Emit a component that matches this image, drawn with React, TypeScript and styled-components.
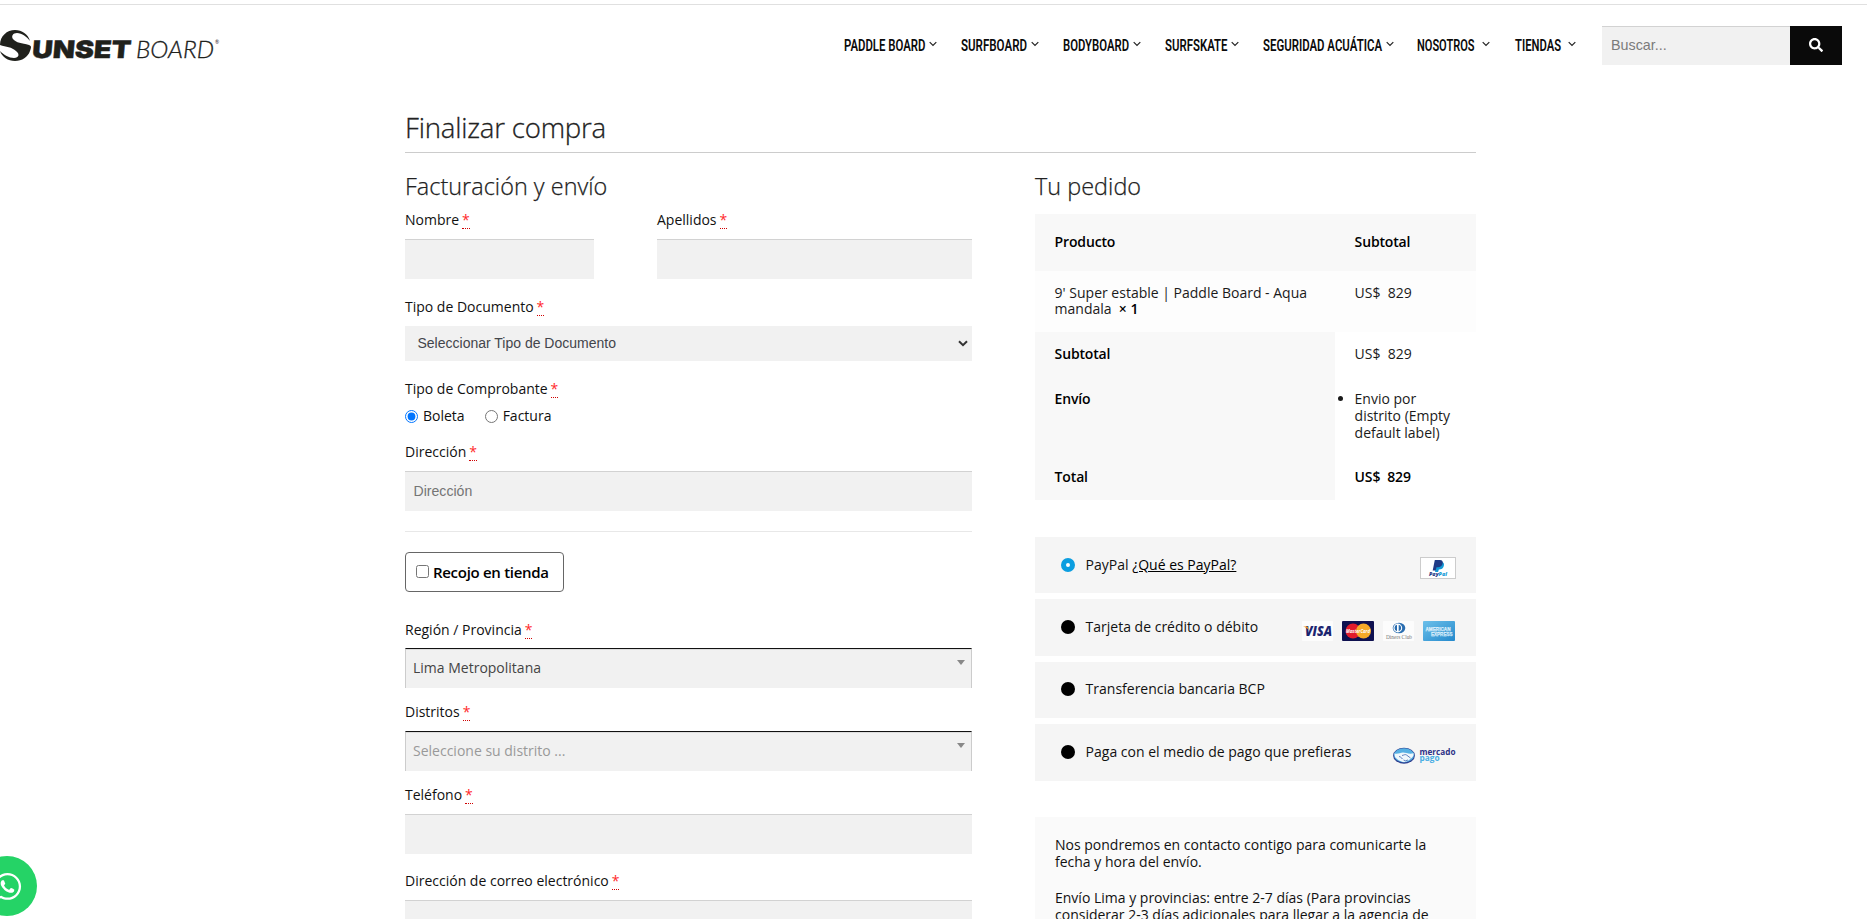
import React from "react";
import styled, { createGlobalStyle } from "styled-components";
import { FaSearch, FaWhatsapp } from "react-icons/fa";

const GlobalStyle = createGlobalStyle`
  *, *::before, *::after { box-sizing: border-box; }
  html, body { margin: 0; height: 919px; overflow: hidden; background: #fff; }
  body { font-family: "Open Sans", "Noto Sans", sans-serif; font-size: 14px; color: #111; }
  input, select { font-family: "Liberation Sans", Arial, sans-serif; margin: 0; }
`;

const Page = styled.div`
  height: 919px;
  overflow: hidden;
  border-top: 1px solid #e0e0e0;
  margin-top: 4px;
`;

const Header = styled.header`
  height: 101px;
  padding: 21px 25px 0 0;
  display: flex;
  align-items: flex-start;
`;

const Logo = styled.svg`
  display: block;
  flex: none;
  width: 222px;
  height: 40px;
`;

const Nav = styled.nav`
  display: flex;
  margin-left: auto;
  height: 36px;
  align-items: center;
`;

const NavItem = styled.a<{ $gap: number; $after: number }>`
  display: flex;
  align-items: center;
  gap: ${(p) => p.$gap}px;
  margin-right: ${(p) => p.$after}px;
  color: #0b0b0b;
`;

const NavText = styled.span<{ $w: number }>`
  display: block;
  width: ${(p) => p.$w}px;
  height: 20px;

  svg {
    display: block;
    overflow: visible;
  }
  text {
    font: 600 17px/20px Roboto, sans-serif;
    fill: #0b0b0b;
  }
`;

const SearchForm = styled.form`
  display: flex;
  width: 240px;
  height: 39px;
`;

const SearchInput = styled.input`
  flex: 1;
  min-width: 0;
  border: 0;
  border-top: 1px solid #d2d2d2;
  border-radius: 0;
  padding: 0 9px 2px;
  font-size: 14.3px;
  background: #f1f1f1;
  outline: none;
  &::placeholder { color: #7b7b7b; }
`;

const SearchButton = styled.button`
  width: 52px;
  border: 0;
  padding: 0 0 2px;
  background: #0a0a0a;
  color: #fff;
  display: flex;
  align-items: center;
  justify-content: center;
`;

const Main = styled.main`
  width: 1071px;
  margin-left: 405px;
`;

const PageTitle = styled.h1`
  margin: 0;
  height: 47px;
  border-bottom: 1px solid #ccc;
  font-size: 27.6px;
  line-height: 42px;
  font-weight: 300;
  letter-spacing: -0.2px;
  -webkit-text-stroke: 0.3px #222;
  color: #222;
`;

const Columns = styled.div`
  display: flex;
  gap: 63px;
`;

const Billing = styled.section`
  width: 567px;
  padding-top: 16px;
`;

const Order = styled.section`
  width: 441px;
  padding-top: 16px;
`;

const SectionTitle = styled.h2<{ $h: number }>`
  margin: 0;
  height: ${(p) => p.$h}px;
  line-height: 34px;
  font-size: 23.4px;
  font-weight: 300;
  letter-spacing: 0.04px;
  -webkit-text-stroke: 0.25px #222;
  color: #222;
`;

const NameRow = styled.div`
  display: grid;
  grid-template-columns: 189px 315px;
  gap: 63px;
`;

const Field = styled.div<{ $after: number }>`
  margin-bottom: ${(p) => p.$after}px;
`;

const Label = styled.label<{ $gap?: number }>`
  display: block;
  line-height: 24px;
  padding-top: 1px;
  margin-bottom: ${(p) => (p.$gap ?? 8) - 1}px;
  color: #111;
`;

const Required = styled.abbr`
  color: #ff2a2a;
  text-decoration: none;
  display: inline-block;
  height: 16px;
  line-height: 14px;
  margin-left: -0.7px;
  border-bottom: 1px dotted #d00000;
`;

const TextInput = styled.input`
  display: block;
  width: 100%;
  height: 40px;
  border: 0;
  border-top: 1px solid #d2d2d2;
  border-radius: 0;
  background: #f1f1f1;
  padding: 0 8.5px 2px;
  font-size: 14.1px;
  outline: none;
  &::placeholder { color: #757575; }
`;

const NativeSelect = styled.div`
  height: 35px;
  background: #f1f1f1;
  padding: 0 4px 1px 12.5px;
  display: flex;
  align-items: center;
  justify-content: space-between;
  font: 14px/34px "Liberation Sans", Arial, sans-serif;
  color: #43454b;
`;

const SearchableSelect = styled.div<{ $muted?: boolean }>`
  height: 40px;
  background: #f1f1f1;
  border: 1px solid #ccc;
  border-width: 1px 1px 0;
  border-top-color: #111;
  box-shadow: inset 0 1px 0 #ddd;
  padding: 0 6px 0 7px;
  display: flex;
  justify-content: space-between;
  line-height: 38px;
  color: ${(p) => (p.$muted ? "#999" : "#444")};

  svg { margin-top: 11px; }
`;

const RadioRow = styled.div`
  display: flex;
  align-items: center;
  height: 24px;
  margin: -4px 0 11px;
  line-height: 24px;
`;

const Radio = styled.input`
  width: 13px;
  height: 13px;
`;

const RadioText = styled.label`
  margin: 0 20px 0 5px;
`;

const Divider = styled.hr`
  margin: 20px 0;
  border: 0;
  height: 1px;
  background: #e8e8e8;
`;

const PickupBox = styled.label`
  display: flex;
  width: 159px;
  height: 40px;
  border: 1px solid #666;
  border-radius: 4px;
  padding: 0 0 0 10px;
  align-items: center;
  gap: 4px;
  margin-bottom: 25px;
  font-size: 15px;
  font-weight: 600;
  letter-spacing: -0.3px;
  white-space: nowrap;
  color: #000;

  input { width: 13px; height: 13px; margin-bottom: 1px; }
`;

const Table = styled.div`
  display: grid;
  grid-template-columns: 300px 141px;
  grid-template-rows: 57px 61px 45px 78px 45px;
  margin-bottom: 37px;
`;

const Cell = styled.div<{ $bg?: string; $pad: number; $bold?: boolean; $lh?: number }>`
  background: ${(p) => p.$bg ?? "transparent"};
  padding: ${(p) => p.$pad}px 20px 0 19.6px;
  line-height: ${(p) => p.$lh ?? 17}px;
  font-weight: ${(p) => (p.$bold ? 600 : 400)};
  letter-spacing: ${(p) => (p.$bold ? "-0.15px" : "0")};
  color: ${(p) => (p.$bold ? "#000" : "#1a1a1a")};
  white-space: pre-wrap;

  b { font-weight: 600; color: #000; }
`;

const ShippingList = styled.ul`
  margin: 0;
  padding: 0;
  list-style: disc outside;
`;

const Methods = styled.div`
  display: grid;
  grid-template-rows: 56px 57px 56px 57px;
  row-gap: 6px;
  margin-bottom: 36px;
`;

const Method = styled.div<{ $lift?: number }>`
  display: flex;
  align-items: center;
  background: #f5f5f5;
  padding: 0 20px ${(p) => p.$lift ?? 1}px 25.6px;
`;

const Dot = styled.span<{ $on?: boolean }>`
  width: 14px;
  height: 14px;
  border-radius: 50%;
  background: ${(p) => (p.$on ? "#fff" : "#000")};
  border: ${(p) => (p.$on ? "5px solid #0c9ee0" : "0")};
  margin-right: 11px;
`;

const MethodName = styled.span`
  line-height: 24px;
  color: #111;
  white-space: nowrap;

  a { color: #000; text-decoration: underline; }
`;

const Marks = styled.span<{ $right?: number }>`
  margin: 7px ${(p) => p.$right ?? 0}px 0 auto;
  display: flex;
  gap: 9px;

  svg { display: block; overflow: visible; }
`;

const Notice = styled.div`
  height: 200px;
  background: #fafafa;
  padding: 19px 20px 0;
  color: #111;

  p { margin: 0 0 19px; line-height: 17px; white-space: nowrap; }
`;

const WhatsAppButton = styled.a`
  position: fixed;
  left: -23px;
  top: 856px;
  width: 60px;
  height: 60px;
  border-radius: 50%;
  background: #25d366;
  color: #fff;
  display: flex;
  align-items: center;
  justify-content: center;
`;

const menu = [
  { text: "PADDLE BOARD", w: 81.5, gap: 4, after: 24 },
  { text: "SURFBOARD", w: 66, gap: 4, after: 24.3 },
  { text: "BODYBOARD", w: 66, gap: 4, after: 23.5 },
  { text: "SURFSKATE", w: 62.5, gap: 4, after: 24 },
  { text: "SEGURIDAD ACUÁTICA", w: 119, gap: 3.5, after: 23.5 },
  { text: "NOSOTROS", w: 57.5, gap: 7.5, after: 25 },
  { text: "TIENDAS", w: 46, gap: 7, after: 25.7 },
];

const Star = () => <Required title="obligatorio">*</Required>;

const Chevron = () => (
  <svg width="8" height="6" viewBox="0 0 8 6" fill="none" stroke="#222" strokeWidth="1.2">
    <path d="M.7 1.2 4 4.5 7.3 1.2" />
  </svg>
);

const Triangle = () => (
  <svg width="8" height="5" viewBox="0 0 8 5">
    <path d="M0 0h8L4 5z" fill="#888" />
  </svg>
);

const SunsetLogo = () => (
  <Logo viewBox="0 0 222 40" aria-label="Sunset Board">
    <g fill="#20211c">
      <path d="M0 19C0 10 7 4 15 4c7 0 13 4 15 11-3-4-8-8-13-8-4 0-6 3-4 6 3 4 9 4 16 6 3 1 2 3 1 6-2 6-8 10-15 10C8 35 2 31 0 25c4 4 9 7 14 7 5 0 6-4 2-7-4-4-10-4-16-6z" />
      <text transform="translate(31.500 31.800) skewX(-5)" x="0" y="0" fontFamily="Inter, sans-serif" fontWeight="900" fontSize="24" textLength="99" lengthAdjust="spacingAndGlyphs" stroke="#20211c" strokeWidth=".4">UNSET</text>
      <text x="136" y="31.5" fontFamily="Lato, sans-serif" fontWeight="300" fontStyle="italic" fontSize="24" textLength="78" lengthAdjust="spacingAndGlyphs" stroke="#20211c" strokeWidth=".3">BOARD</text>
      <text x="215" y="18" fontFamily="Lato, sans-serif" fontSize="5">®</text>
    </g>
  </Logo>
);

const PayPalMark = () => (
  <svg width="36" height="22" viewBox="0 0 36 22">
    <rect x=".5" y=".5" width="35" height="21" fill="#fff" stroke="#ccc" />
    <path d="M16 5h5c3 0 3.400 2 2.800 4-.6 2.500-2.300 3.500-5 3.500l-.7 2.500h-3z" fill="#139ad6" />
    <path d="M14.800 3h5c2.600 0 3.400 1.600 2.800 3.800-.6 2.200-2.300 3.400-4.600 3.400h-1.500l-.8 3.300h-3z" fill="#1f3a86" />
    <text x="9" y="18.600" fontFamily="Open Sans, sans-serif" fontWeight="800" fontStyle="italic" fontSize="5.600" textLength="18" lengthAdjust="spacingAndGlyphs">
      <tspan fill="#1f3a86">Pay</tspan><tspan fill="#139ad6">Pal</tspan>
    </text>
  </svg>
);

const Visa = () => (
  <svg width="31" height="20" viewBox="0 0 31 20">
    <rect width="31" height="20" rx="1" fill="#fcfcfc" />
    <text x="3" y="14.800" fontFamily="Open Sans, sans-serif" fontWeight="800" fontStyle="italic" fontSize="14" fill="#1b2470" textLength="27" lengthAdjust="spacingAndGlyphs">VISA</text>
    <path d="M1 5.500h4.500L7 9C5 7 3 6 1 5.500z" fill="#f29a1f" />
  </svg>
);

const MasterCard = () => (
  <svg width="32" height="20" viewBox="0 0 32 20">
    <rect width="32" height="20" rx="1" fill="#0e104f" />
    <circle cx="11" cy="10" r="7.500" fill="#e21b2b" />
    <circle cx="21.500" cy="10" r="7.500" fill="#f7a928" />
    <text x="4" y="12" fontFamily="Open Sans, sans-serif" fontWeight="700" fontStyle="italic" fontSize="5.500" fill="#fff" textLength="24" lengthAdjust="spacingAndGlyphs">MasterCard</text>
  </svg>
);

const Diners = () => (
  <svg width="31" height="20" viewBox="0 0 31 20">
    <rect width="31" height="20" rx="1" fill="#fcfcfc" />
    <ellipse cx="16" cy="7" rx="6.300" ry="5.300" fill="#2a6db0" />
    <circle cx="14.800" cy="7" r="4.400" fill="#fff" />
    <path d="M14 3.800v6.400a3.300 3.300 0 0 1 0-6.400zM15.700 3.800v6.400a3.300 3.300 0 0 0 0-6.400z" fill="#2a6db0" />
    <text x="3" y="17.800" fontFamily="Liberation Serif, serif" fontSize="6.200" fill="#777" textLength="26" lengthAdjust="spacingAndGlyphs">Diners Club</text>
  </svg>
);

const Amex = () => (
  <svg width="32" height="20" viewBox="0 0 32 20">
    <defs>
      <linearGradient id="amex" x1="0" y1="0" x2="1" y2="1">
        <stop offset="0" stopColor="#6cc0ea" />
        <stop offset="1" stopColor="#2489cc" />
      </linearGradient>
    </defs>
    <rect width="32" height="20" rx="1" fill="url(#amex)" />
    <g fontFamily="Liberation Sans, sans-serif" fontWeight="700" fontSize="5.200" fill="#a9daf5" stroke="#fff" strokeWidth=".25">
      <text x="2.500" y="9.500" textLength="25" lengthAdjust="spacingAndGlyphs">AMERICAN</text>
      <text x="8" y="14.500" textLength="21.500" lengthAdjust="spacingAndGlyphs">EXPRESS</text>
    </g>
  </svg>
);

const MercadoPago = () => (
  <svg width="63" height="18" viewBox="0 0 63 18">
    <ellipse cx="11" cy="8.700" rx="10.900" ry="8" fill="#2f3f8f" />
    <ellipse cx="11" cy="8.300" rx="10.100" ry="7.100" fill="#55b0e3" />
    <path d="M1.500 6.500C5 7.500 7 5.500 10 5.500c3 0 6 2 10.500.8.3 2-.3 3.200-1.600 4.400C16 13.500 13 15 11 15c-3 0-7-2.500-9-5z" fill="#eef7fc" />
    <path d="M6 9.500c1.500.2 2.500 1.200 3.500 2.500M9 8.500c2-.3 3-1.500 4.500-.5l4 3M10.500 13l2 .8 2.500-.8" fill="none" stroke="#3a62ad" strokeWidth=".8" />
    <g fontFamily="Open Sans, sans-serif" fontWeight="700">
      <text x="26.500" y="7.600" fontSize="8.600" fill="#2d3287" textLength="36" lengthAdjust="spacingAndGlyphs">mercado</text>
      <text x="26.500" y="14.200" fontSize="8.600" fill="#4aaee4" textLength="20" lengthAdjust="spacingAndGlyphs">pago</text>
    </g>
  </svg>
);

export default function App() {
  return (
    <>
      <GlobalStyle />
      <Page>
        <Header>
          <SunsetLogo />
          <Nav>
            {menu.map((m) => (
              <NavItem key={m.text} $gap={m.gap} $after={m.after}>
                <NavText $w={m.w}>
                  <svg width={m.w} height="20">
                    <text x="0" y="16.500" textLength={m.w} lengthAdjust="spacingAndGlyphs">{m.text}</text>
                  </svg>
                </NavText>
                <Chevron />
              </NavItem>
            ))}
          </Nav>
          <SearchForm>
            <SearchInput placeholder="Buscar..." />
            <SearchButton type="button" aria-label="Buscar">
              <FaSearch size={14} />
            </SearchButton>
          </SearchForm>
        </Header>

        <Main>
          <PageTitle>Finalizar compra</PageTitle>
          <Columns>
            <Billing>
              <SectionTitle $h={38}>Facturación y envío</SectionTitle>
              <NameRow>
                <Field $after={15}>
                  <Label>Nombre <Star /></Label>
                  <TextInput />
                </Field>
                <Field $after={15}>
                  <Label>Apellidos <Star /></Label>
                  <TextInput />
                </Field>
              </NameRow>
              <Field $after={15}>
                <Label>Tipo de Documento <Star /></Label>
                <NativeSelect>
                  Seleccionar Tipo de Documento
                  <svg width="10" height="7" viewBox="0 0 10 7" fill="none" stroke="#333" strokeWidth="2">
                    <path d="M1 1.200 5 5.200 9 1.200" />
                  </svg>
                </NativeSelect>
              </Field>
              <Label>Tipo de Comprobante <Star /></Label>
              <RadioRow>
                <Radio type="radio" name="doc" defaultChecked />
                <RadioText>Boleta</RadioText>
                <Radio type="radio" name="doc" />
                <RadioText>Factura</RadioText>
              </RadioRow>
              <Field $after={0}>
                <Label>Dirección <Star /></Label>
                <TextInput placeholder="Dirección" />
              </Field>
              <Divider />
              <PickupBox>
                <input type="checkbox" />
                Recojo en tienda
              </PickupBox>
              <Field $after={11}>
                <Label $gap={7}>Región / Provincia <Star /></Label>
                <SearchableSelect>Lima Metropolitana<Triangle /></SearchableSelect>
              </Field>
              <Field $after={11}>
                <Label>Distritos <Star /></Label>
                <SearchableSelect $muted>Seleccione su distrito ...<Triangle /></SearchableSelect>
              </Field>
              <Field $after={14}>
                <Label>Teléfono <Star /></Label>
                <TextInput />
              </Field>
              <Field $after={0}>
                <Label>Dirección de correo electrónico <Star /></Label>
                <TextInput />
              </Field>
            </Billing>

            <Order>
              <SectionTitle $h={45}>Tu pedido</SectionTitle>
              <Table>
                <Cell $bg="#f8f8f8" $pad={19} $bold>Producto</Cell>
                <Cell $bg="#f8f8f8" $pad={19} $bold>Subtotal</Cell>
                <Cell $bg="#fdfdfd" $pad={14} $lh={16}>9' Super estable | Paddle Board - Aqua mandala  <b>× 1</b></Cell>
                <Cell $bg="#fdfdfd" $pad={14} $lh={16}>US$  829</Cell>
                <Cell $bg="#f8f8f8" $pad={13} $bold>Subtotal</Cell>
                <Cell $pad={13}>US$  829</Cell>
                <Cell $bg="#f8f8f8" $pad={13} $bold>Envío</Cell>
                <Cell $pad={13}>
                  <ShippingList>
                    <li>Envio por distrito (Empty default label)</li>
                  </ShippingList>
                </Cell>
                <Cell $bg="#f8f8f8" $pad={13} $bold>Total</Cell>
                <Cell $pad={13} $bold>US$  829</Cell>
              </Table>
              <Methods>
                <Method>
                  <Dot $on />
                  <MethodName>PayPal <a>¿Qué es PayPal?</a></MethodName>
                  <Marks><PayPalMark /></Marks>
                </Method>
                <Method>
                  <Dot />
                  <MethodName>Tarjeta de crédito o débito</MethodName>
                  <Marks $right={1}><Visa /><MasterCard /><Diners /><Amex /></Marks>
                </Method>
                <Method $lift={2}>
                  <Dot />
                  <MethodName>Transferencia bancaria BCP</MethodName>
                </Method>
                <Method>
                  <Dot />
                  <MethodName>Paga con el medio de pago que prefieras</MethodName>
                  <Marks><MercadoPago /></Marks>
                </Method>
              </Methods>
              <Notice>
                <p>Nos pondremos en contacto contigo para comunicarte la<br />fecha y hora del envío.</p>
                <p>Envío Lima y provincias: entre 2-7 días (Para provincias<br />considerar 2-3 días adicionales para llegar a la agencia de</p>
              </Notice>
            </Order>
          </Columns>
        </Main>
        <WhatsAppButton aria-label="WhatsApp"><FaWhatsapp size={31} /></WhatsAppButton>
      </Page>
    </>
  );
}
